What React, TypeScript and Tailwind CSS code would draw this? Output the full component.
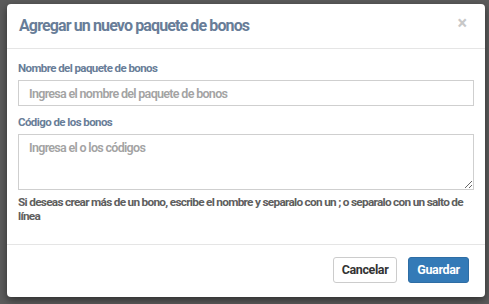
import React from 'react';

const font = { fontFamily: 'Roboto, "Noto Sans", sans-serif' };

export default function App() {
  return (
    <div className="h-[304px] w-[489px] overflow-hidden bg-[#5c5c5c] pl-[7px] pt-[4px]" style={font}>
      <div className="flex h-[293px] w-[478px] flex-col rounded-[4px] bg-white shadow-[0_3px_9px_rgba(0,0,0,0.5)]">
        {/* Header */}
        <div className="flex h-[45px] shrink-0 items-center justify-between border-b border-[#e5e5e5] pl-[12px] pr-[18px]">
          <h4 className="text-[16px] font-bold tracking-[-0.055em] text-[#687d98]">
            Agregar un nuevo paquete de bonos
          </h4>
          <button className="-mt-[6px] text-[18px] font-bold leading-none text-[#c8c8c8]">×</button>
        </div>

        {/* Body */}
        <div className="flex flex-col px-[11px] pt-[11px]">
          <label className="mb-[4px] text-[11.5px] font-bold leading-[16px] tracking-[-0.05em] text-[#687d98]">
            Nombre del paquete de bonos
          </label>
          <input
            className="h-[26px] w-full rounded-none border border-[#cfcfcf] px-[10px] text-[12.5px] font-semibold tracking-[-0.055em] outline-none placeholder:text-[#a3a3a3]"
            placeholder="Ingresa el nombre del paquete de bonos"
          />
          <label className="mb-[4px] mt-[8px] text-[11.5px] font-bold leading-[16px] tracking-[-0.05em] text-[#687d98]">
            Código de los bonos
          </label>
          <textarea
            className="block h-[56px] w-full rounded-none border border-[#cfcfcf] px-[10px] py-[5px] text-[12.5px] font-semibold leading-[16px] tracking-[-0.055em] outline-none placeholder:text-[#a3a3a3]"
            placeholder="Ingresa el o los códigos"
          />
          <p className="mt-[5px] text-[11.8px] font-bold leading-[14px] tracking-[-0.06em] text-[#5e5e5e]">
            Si deseas crear más de un bono, escribe el nombre y separalo con un ; o separalo con un salto de línea
          </p>
        </div>

        {/* Footer */}
        <div className="mt-auto flex h-[53px] items-center justify-end gap-[11px] border-t border-[#e5e5e5] pr-[16px] pb-[2px]">
          <button className="h-[26px] w-[64px] rounded-[3px] border border-[#cccccc] bg-white text-[12.5px] font-bold tracking-[-0.03em] text-[#333333]">
            Cancelar
          </button>
          <button className="h-[26px] w-[61px] rounded-[3px] border border-[#2e6da4] bg-[#337ab7] text-[12.5px] font-bold tracking-[-0.03em] text-white">
            Guardar
          </button>
        </div>
      </div>
    </div>
  );
}
